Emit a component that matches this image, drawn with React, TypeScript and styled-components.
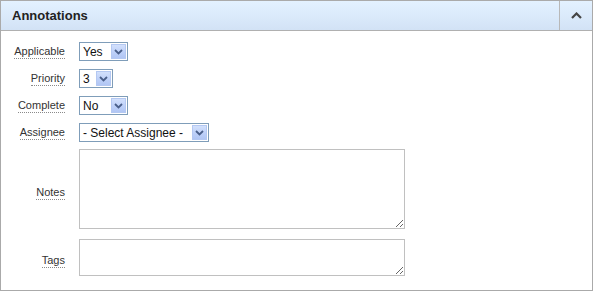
import React from 'react';
import styled, { createGlobalStyle } from 'styled-components';

const GlobalStyle = createGlobalStyle`
  html, body {
    margin: 0;
    padding: 0;
    background: #ffffff;
  }

  body {
    font-family: "Liberation Sans", Arial, sans-serif;
    color: #333;
  }
`;

const StyledPanel = styled.section`
  box-sizing: border-box;
  width: 593px;
  height: 291px;
  border: 1px solid #aaaaaa;
  background: #ffffff;
  display: flex;
  flex-direction: column;
`;

const Header = styled.header`
  display: flex;
  align-items: stretch;
  height: 29px;
  border-bottom: 1px solid #b0b0b0;
  background: linear-gradient(to bottom, #e3f1ff 0%, #dbeafb 50%, #d2e2f5 100%);

  h2 {
    flex: 1;
    margin: 0;
    padding-left: 11px;
    display: flex;
    align-items: center;
    font-size: 13px;
    font-weight: bold;
    color: #222;
  }
`;

const CollapseButton = styled.button`
  width: 33px;
  border: none;
  border-left: 1px solid #b8b8b8;
  background: transparent;
  padding: 0;
  display: flex;
  align-items: center;
  justify-content: center;
  cursor: pointer;
`;

const Form = styled.div`
  display: grid;
  grid-template-columns: 64px 1fr;
  column-gap: 14px;
  row-gap: 8px;
  padding: 11px 0 0 0;
  align-items: center;
`;

const Label = styled.label<{ $shift?: number }>`
  justify-self: end;
  margin-top: ${p => (p.$shift ?? 0) * 2}px;
  font-size: 11px;
  color: #333;
  line-height: 12px;
  border-bottom: 1px dotted #8a8a8a;
  padding-bottom: 1px;
`;

const Field = styled.div<{ $gapTop?: number }>`
  display: flex;
  margin-top: ${p => p.$gapTop ?? 0}px;
`;

const SelectBox = styled.div<{ $width: number }>`
  box-sizing: border-box;
  width: ${p => p.$width}px;
  height: 19px;
  border: 1px solid #7f9db9;
  background: #fff;
  display: flex;
  align-items: center;
  padding: 1px;
  cursor: default;

  span {
    flex: 1;
    padding-left: 2px;
    font-size: 12px;
    color: #111;
    white-space: nowrap;
    overflow: hidden;
  }
`;

const ArrowButton = styled.div`
  box-sizing: border-box;
  width: 15px;
  height: 15px;
  border: 1px solid #b4c8f2;
  background: linear-gradient(to bottom, #d2e0fc 0%, #bccff8 60%, #b1c6f4 100%);
  display: flex;
  align-items: center;
  justify-content: center;
`;

const TextArea = styled.textarea<{ $height: number }>`
  box-sizing: border-box;
  width: 326px;
  height: ${p => p.$height}px;
  margin: 0;
  border: 1px solid #c0c0c0;
  font-family: "Liberation Sans", Arial, sans-serif;
  font-size: 12px;
  outline: none;
`;

interface SelectProps {
  value: string;
  width: number;
}

const Select = ({ value, width }: SelectProps) => {
  return (
    <SelectBox $width={width}>
      <span>{value}</span>
      <ArrowButton>
        <svg width="9" height="6" viewBox="0 0 9 6">
          <polyline points="1,1 4.5,4.5 8,1" fill="none" stroke="#4a5f8a" strokeWidth="1.8" />
        </svg>
      </ArrowButton>
    </SelectBox>
  );
};

const App = () => {
  return (
    <>
      <GlobalStyle />
      <StyledPanel>
        <Header>
          <h2>Annotations</h2>
          <CollapseButton aria-label="Collapse">
            <svg width="11" height="7" viewBox="0 0 11 7">
              <polyline points="1,6 5.5,1.5 10,6" fill="none" stroke="#454545" strokeWidth="2.2" />
            </svg>
          </CollapseButton>
        </Header>

        <Form>
          <Label>Applicable</Label>
          <Field>
            <Select value="Yes" width={49} />
          </Field>

          <Label>Priority</Label>
          <Field>
            <Select value="3" width={34} />
          </Field>

          <Label>Complete</Label>
          <Field>
            <Select value="No" width={49} />
          </Field>

          <Label>Assignee</Label>
          <Field>
            <Select value="- Select Assignee -" width={130} />
          </Field>

          <Label $shift={3}>Notes</Label>
          <Field $gapTop={-1}>
            <TextArea $height={80} />
          </Field>

          <Label $shift={4}>Tags</Label>
          <Field $gapTop={2}>
            <TextArea $height={37} />
          </Field>
        </Form>
      </StyledPanel>
    </>
  );
};

export default App;
